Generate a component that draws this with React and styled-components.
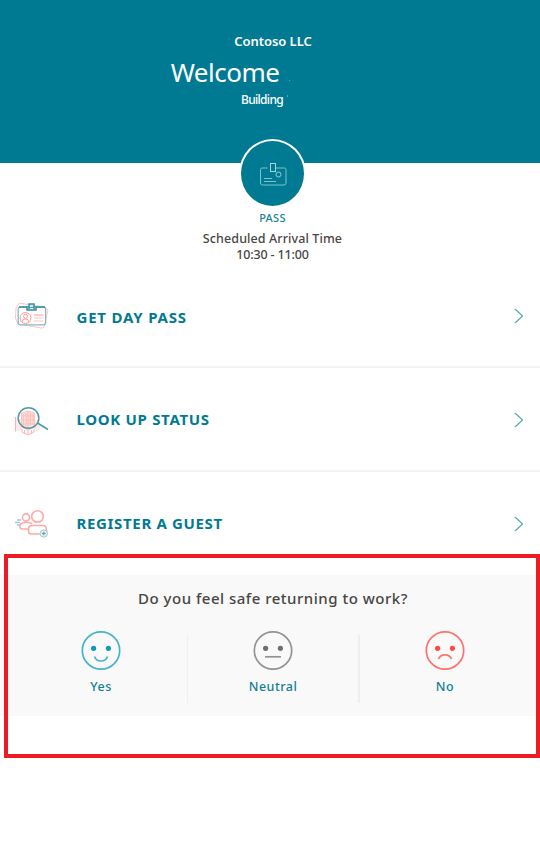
import React from 'react';
import styled, { createGlobalStyle } from 'styled-components';

const TEAL = '#007a93';

const GlobalStyle = createGlobalStyle`
  * { box-sizing: border-box; }
  body {
    margin: 0;
    background: #fff;
    font-family: 'Noto Sans', 'Open Sans', sans-serif;
  }
`;

const Page = styled.main`
  width: 540px;
  height: 850px;
  overflow: hidden;
  background: #fff;
`;

const Header = styled.header`
  height: 163px;
  padding: 32px 0 0 6px;
  background: ${TEAL};
  color: #fff;
  display: flex;
  flex-direction: column;
  align-items: center;
`;

const Company = styled.div`
  font-size: 13px;
  line-height: 18px;
  font-weight: 600;
  letter-spacing: -0.05px;
  white-space: nowrap;
`;

const Welcome = styled.h1`
  position: relative;
  margin: 4px 96px 0 0;
  font-size: 26px;
  line-height: 36px;
  font-weight: 400;
  letter-spacing: -0.5px;
`;

const Building = styled.div`
  position: relative;
  margin: 1px 22px 0 0;
  font-size: 12px;
  line-height: 17px;
  font-weight: 500;
  letter-spacing: -0.7px;
`;

const Speck = styled.i`
  position: absolute;
  right: ${(p) => p.$right}px;
  top: ${(p) => p.$top}px;
  width: 1px;
  height: ${(p) => p.$height}px;
  background: #4fa6b7;
`;

const PassSection = styled.section`
  height: 101px;
  padding-left: 5px;
  display: flex;
  flex-direction: column;
  align-items: center;
  color: #484644;
`;

const PassBadge = styled.div`
  width: 67px;
  height: 69px;
  margin-top: -24px;
  flex: none;
  border: 2px solid #fff;
  border-radius: 50%;
  background: ${TEAL};
  display: grid;
  place-items: center;
`;

const PassLabel = styled.div`
  margin-top: 3px;
  font-size: 11px;
  line-height: 14px;
  font-weight: 500;
  letter-spacing: 0.3px;
  color: #1a8499;
`;

const Arrival = styled.div`
  margin-top: ${(p) => p.$gap}px;
  font-size: 12.5px;
  line-height: 16px;
  font-weight: 500;
  letter-spacing: ${(p) => p.$spacing}px;
  white-space: nowrap;
`;

const Menu = styled.nav`
  height: 311px;
`;

const MenuRow = styled.a`
  height: 104px;
  padding: ${(p) => (p.$last ? 0 : 1)}px 16px 0 14px;
  display: flex;
  align-items: center;
  border-bottom: ${(p) => (p.$last ? '0' : '2px solid #f3f3f3')};
  color: ${TEAL};
`;

const RowIcon = styled.svg`
  width: 36px;
  height: 36px;
  flex: none;
  fill: none;
`;

const RowLabel = styled.span`
  flex: 1;
  margin-left: 26.5px;
  padding: ${(p) => p.$drop}px 0 ${(p) => p.$lift}px;
  font-size: 15px;
  line-height: 20px;
  font-weight: 700;
  letter-spacing: ${(p) => p.$spacing}px;
`;

const Chevron = styled.svg`
  width: 10px;
  height: 16px;
  fill: none;
  stroke: #5aabbc;
  stroke-width: 1.3;
`;

const Survey = styled.section`
  position: relative;
  height: 141px;
  padding: 12px 0 0;
  background: #f9f9f9;
`;

const Highlight = styled.div`
  position: absolute;
  left: 4px;
  top: -21px;
  width: 536px;
  height: 204px;
  border: 4px solid #ed1c24;
`;

const Question = styled.h2`
  margin: 0;
  padding-left: 6px;
  text-align: center;
  font-size: 15px;
  line-height: 22px;
  font-weight: 500;
  letter-spacing: 0.5px;
  color: #484644;
`;

const Choices = styled.div`
  display: grid;
  grid-template-columns: 172px 172px 172px;
  padding-left: 15px;
  margin-top: 21px;
`;

const Choice = styled.div`
  display: flex;
  flex-direction: column;
  align-items: center;
  position: relative;
  font-size: 12.5px;
  line-height: 18px;
  font-weight: 500;
  letter-spacing: 0.5px;
  color: #117f96;
`;

const Face = styled.svg`
  width: 40px;
  height: 40px;
  margin: 0 0 8px;
  fill: none;
  stroke: ${(p) => p.$line};
  color: ${(p) => p.$color};
  stroke-width: 1.7;
`;

const Separator = styled.i`
  position: absolute;
  right: -1px;
  top: 5px;
  width: ${(p) => (p.$strong ? 2 : 1)}px;
  height: 68px;
  background: ${(p) => (p.$strong ? '#eeeeee' : '#f0f0f0')};
`;

function BadgeIcon() {
  return (
    <svg width="28" height="26" viewBox="0 0 28 26" fill="none" stroke="#7fc0cd" strokeWidth="1">
      <path d="M8.5 7H3Q1.5 7 1.5 8.5V22Q1.5 24 3.5 24H25Q27 24 27 22V8.5Q27 7 25.5 7H16" />
      <rect x="11.5" y="2.5" width="5" height="8" stroke="#a5d3dc" />
      <circle cx="19.5" cy="13.5" r="2.5" fill={TEAL} stroke="#9accd7" />
      <path d="M5 17.5h8M5 20.5h12" />
    </svg>
  );
}

function PassIcon() {
  return (
    <RowIcon viewBox="0 -1 36 36">
      <path d="M2 9L5 4.5Q6 4 8 4.5L31 8L34 11L30 28Q29.5 29.5 27 29L4 25L1.5 19Z" stroke="#ffc4c1" />
      <rect x="4.2" y="8.2" width="27.4" height="17.6" rx="2" fill="#fff" stroke="#83bac4" strokeWidth="1.3" />
      <path d="M5 8H31" stroke="#358e9f" strokeWidth="1.5" />
      <path d="M13 8V11H22V8M15 10V5H20V10" fill="#d5e9ec" stroke="#358e9f" strokeWidth="1.5" />
      <g stroke="#ff9b96">
        <circle cx="11.5" cy="19" r="5.5" />
        <circle cx="11.5" cy="17.3" r="2" />
        <path d="M8 23Q8.2 20 11.5 20T15 23M20 16H29.5" />
        <path d="M20 19H29.5M20 22H29.5" stroke="#ffc4c1" />
      </g>
    </RowIcon>
  );
}

function SearchIcon() {
  return (
    <RowIcon viewBox="0 1 36 36">
      <path d="M2 17L8 19V29L2 30Z M20 20L26 18V29L20 30Z" fill="#ffe8e6" />
      <path d="M1.5 16V30.5" stroke="#ffb0ac" />
      <path d="M7.5 12L14 10L20.5 12V26L14 29L7.5 26Z" fill="#ffdedb" stroke="#ffc1bd" />
      <path d="M14 10V28M9.5 13v11M12 12v13M16.5 12v13M19 13v11M8 15h13M8 19h13M8 23h13" stroke="#ffb5b1" strokeWidth=".7" />
      <path d="M8 28v3l6 3 6-3v-3M10.5 29v3M14 29v5M17.5 29v3" stroke="#ffb5b1" />
      <path d="M23.5 22L34 28.5" stroke="#4b9cab" strokeWidth="1.6" />
      <circle cx="14.5" cy="17" r="10.3" stroke="#4b9cab" strokeWidth="1.5" />
    </RowIcon>
  );
}

function GuestIcon() {
  return (
    <RowIcon viewBox="0 0 36 36">
      <path d="M7 14H3M6 16.5H1M6 19H3" stroke="#9fcad2" strokeWidth="1.5" />
      <g stroke="#ffaaa6" strokeWidth="1.6">
        <circle cx="12" cy="11.5" r="3.6" />
        <path d="M14 23H8Q6 23 6 20.5Q6 16.5 11 16.5H15Q17 16.5 18 18" />
        <circle cx="23.5" cy="10.5" r="5.8" />
        <path d="M26 28H17Q14.5 28 14.5 25V23Q14.5 19.5 18.5 19.5H28Q32.5 19.5 32.5 24V26" />
      </g>
      <circle cx="29.8" cy="27.5" r="3.7" fill="#e2f0f2" stroke="#a3ccd4" />
      <path d="M28 27.5H31.6M29.8 25.7V29.3" stroke="#5aa5b3" strokeWidth="1.1" />
    </RowIcon>
  );
}

const menuItems = [
  { label: 'GET DAY PASS', Icon: PassIcon, spacing: 0.8, drop: 3, lift: 0 },
  { label: 'LOOK UP STATUS', Icon: SearchIcon, spacing: 0.68, drop: 0, lift: 1 },
  { label: 'REGISTER A GUEST', Icon: GuestIcon, spacing: 0.66, drop: 0, lift: 2 },
];

const choices = [
  { label: 'Yes', color: '#0a9cb8', line: '#45b4cb', mouth: 'M13.5 26.5Q15 31 20 31T26.5 26.5' },
  { label: 'Neutral', color: '#6f6f6f', line: '#939393', mouth: 'M12 26.8H28' },
  { label: 'No', color: '#ff4a44', line: '#ff726d', mouth: 'M13.5 29Q15 24.8 20 24.8T26.5 29' },
];

export default function App() {
  return (
    <Page>
      <GlobalStyle />
      <Header>
        <Company>Contoso LLC</Company>
        <Welcome>Welcome<Speck $right={-11} $top={26} $height={1} /></Welcome>
        <Building>Building<Speck $right={-5} $top={4} $height={2} /></Building>
      </Header>
      <PassSection>
        <PassBadge><BadgeIcon /></PassBadge>
        <PassLabel>PASS</PassLabel>
        <Arrival $gap={6} $spacing={0.1}>Scheduled Arrival Time</Arrival>
        <Arrival $gap={0} $spacing={-0.15}>10:30 - 11:00</Arrival>
      </PassSection>
      <Menu>
        {menuItems.map(({ label, Icon, spacing, drop, lift }, i) => (
          <MenuRow key={label} $last={i === 2}>
            <Icon />
            <RowLabel $spacing={spacing} $drop={drop} $lift={lift}>{label}</RowLabel>
            <Chevron viewBox="0 0 10 16"><path d="M1 1L8.5 8L1 15" /></Chevron>
          </MenuRow>
        ))}
      </Menu>
      <Survey>
        <Question>Do you feel safe returning to work?</Question>
        <Choices>
          {choices.map(({ label, color, line, mouth }, i) => (
            <Choice key={label}>
              <Face $color={color} $line={line} viewBox="0 0 40 40">
                <circle cx="20" cy="20.5" r="18.7" />
                <circle cx="12.6" cy="18.3" r="2.6" fill="currentColor" stroke="none" />
                <circle cx="27.4" cy="18.3" r="2.6" fill="currentColor" stroke="none" />
                <path d={mouth} />
              </Face>
              {label}
              {i < 2 && <Separator $strong={i === 1} />}
            </Choice>
          ))}
        </Choices>
        <Highlight />
      </Survey>
    </Page>
  );
}
